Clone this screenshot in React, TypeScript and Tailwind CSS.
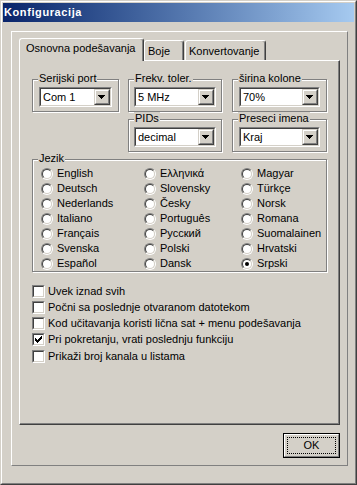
import React from "react";

function Arrow() {
  return (
    <svg width="12" height="12" viewBox="0 0 12 12" shapeRendering="crispEdges">
      <polygon
        transform="translate(2 4)"
        points="0,0 7,0 7,1 6,1 6,2 5,2 5,3 4,3 4,4 3,4 3,3 2,3 2,2 1,2 1,1 0,1"
        fill="#000"
      />
    </svg>
  );
}

function Combo({ value }: { value: string }) {
  return (
    <div className="h-[20px] w-full border border-t-[#808080] border-l-[#808080] border-r-white border-b-white">
      <div className="flex h-full border border-t-[#404040] border-l-[#404040] border-r-[#d4d0c8] border-b-[#d4d0c8] bg-white">
        <div className="flex-1 pl-[2px] leading-[16px] whitespace-nowrap overflow-hidden">{value}</div>
        <div className="h-[16px] w-[16px] border border-t-[#d4d0c8] border-l-[#d4d0c8] border-r-[#404040] border-b-[#404040]">
          <div className="h-full w-full border border-t-white border-l-white border-r-[#808080] border-b-[#808080] bg-[#d4d0c8]">
            <Arrow />
          </div>
        </div>
      </div>
    </div>
  );
}

function Group({
  label,
  className,
  children,
}: {
  label: string;
  className: string;
  children?: React.ReactNode;
}) {
  return (
    <div
      className={`relative border border-[#808080] shadow-[inset_1px_1px_0_#fff,1px_1px_0_#fff] ${className}`}
    >
      <span className="absolute -top-[8px] left-[5px] bg-[#d4d0c8] px-[1px] leading-[13px] whitespace-nowrap">
        {label}
      </span>
      {children}
    </div>
  );
}

function Radio({ label, checked }: { label: string; checked?: boolean }) {
  return (
    <div className="flex h-[15px] items-center">
      <div className="h-[12px] w-[12px] shrink-0 rounded-full border border-t-[#808080] border-l-[#808080] border-r-white border-b-white">
        <div className="flex h-full w-full items-center justify-center rounded-full border border-t-[#404040] border-l-[#404040] border-r-[#d4d0c8] border-b-[#d4d0c8] bg-white">
          {checked && <div className="h-[4px] w-[4px] rounded-full bg-black" />}
        </div>
      </div>
      <span className="ml-[4px] whitespace-nowrap">{label}</span>
    </div>
  );
}

function Check({ label, checked }: { label: string; checked?: boolean }) {
  return (
    <div className="flex h-[16.25px] items-center">
      <div className="h-[13px] w-[13px] shrink-0 border border-t-[#808080] border-l-[#808080] border-r-white border-b-white">
        <div className="h-full w-full border border-t-[#404040] border-l-[#404040] border-r-[#d4d0c8] border-b-[#d4d0c8] bg-white">
          {checked && (
            <svg width="9" height="9" viewBox="0 0 9 9" shapeRendering="crispEdges">
              <polygon
                transform="translate(1 1)"
                points="0,2 1,2 1,3 2,3 2,4 3,4 3,3 4,3 4,2 5,2 5,1 6,1 6,0 7,0 7,3 6,3 6,4 5,4 5,5 4,5 4,6 3,6 3,7 2,7 2,6 1,6 1,5 0,5"
                fill="#000"
              />
            </svg>
          )}
        </div>
      </div>
      <span className="ml-[3px] whitespace-nowrap">{label}</span>
    </div>
  );
}

const langs: [string, boolean?][] = [
  ["English"],
  ["Deutsch"],
  ["Nederlands"],
  ["Italiano"],
  ["Français"],
  ["Svenska"],
  ["Español"],
  ["Ελληνικά"],
  ["Slovensky"],
  ["Česky"],
  ["Português"],
  ["Русский"],
  ["Polski"],
  ["Dansk"],
  ["Magyar"],
  ["Türkçe"],
  ["Norsk"],
  ["Romana"],
  ["Suomalainen"],
  ["Hrvatski"],
  ["Srpski", true],
];

export default function App() {
  return (
    <div className="h-[485px] w-[357px] border border-t-[#d4d0c8] border-l-[#d4d0c8] border-r-[#404040] border-b-[#404040] font-['Liberation_Sans',Arial,sans-serif] text-[11px] leading-[13px] text-black">
      <div className="h-full w-full border border-t-white border-l-white border-r-[#808080] border-b-[#808080] bg-[#d4d0c8] p-[1px]">
        <div className="h-[19px] bg-linear-to-r from-[#0a246a] to-[#a6caf0] pl-[1px] pt-[3px] text-[11px] font-bold leading-[13px] tracking-[0.6px] text-white">
          Konfiguracija
        </div>
        <div className="ml-[8px] mt-[9px] w-[337px] border border-t-white border-l-white border-r-[#808080] border-b-[#808080] px-[7px] pt-[6px] pb-[7px]">
          {/* Tabs */}
          <div className="flex h-[22px] items-end">
            <div className="relative z-10 -mb-px h-[23px] w-[125px] rounded-t-[3px] border-l border-t border-r border-l-white border-t-white border-r-[#404040] bg-[#d4d0c8] pl-[6px] pt-[3px] shadow-[inset_-1px_0_0_#808080] whitespace-nowrap">
              Osnovna podešavanja
            </div>
            <div className="h-[20px] w-[40px] rounded-t-[3px] border-l border-t border-r border-l-white border-t-white border-r-[#404040] pl-[3px] pt-[4px] shadow-[inset_-1px_0_0_#808080]">
              Boje
            </div>
            <div className="ml-[1px] h-[20px] w-[81px] rounded-t-[3px] border-l border-t border-r border-l-white border-t-white border-r-[#404040] pl-[3px] pt-[4px] shadow-[inset_-1px_0_0_#808080]">
              Konvertovanje
            </div>
          </div>
          {/* Page */}
          <div className="h-[365px] w-[321px] border border-t-white border-l-white border-r-[#404040] border-b-[#404040] pl-[12px] pt-[18px] shadow-[inset_-1px_-1px_0_#808080]">
            <div className="flex">
              <Group label="Serijski port" className="h-[33px] w-[87px] px-[6px] pt-[7px]">
                <Combo value="Com 1" />
              </Group>
              <Group label="Frekv. toler." className="ml-[9px] h-[33px] w-[94px] px-[5px] pt-[7px]">
                <Combo value="5 MHz" />
              </Group>
              <Group label="širina kolone" className="ml-[10px] h-[33px] w-[95px] px-[6px] pt-[7px]">
                <Combo value="70%" />
              </Group>
            </div>
            <div className="mt-[7px] flex">
              <Group label="PIDs" className="ml-[96px] h-[33px] w-[94px] px-[5px] pt-[7px]">
                <Combo value="decimal" />
              </Group>
              <Group label="Preseci imena" className="ml-[10px] h-[33px] w-[95px] px-[6px] pt-[7px]">
                <Combo value="Kraj" />
              </Group>
            </div>
            <Group label="Jezik" className="mt-[7px] h-[113px] w-[295px] pl-[8px] pt-[6px]">
              <div className="grid grid-flow-col grid-cols-[103px_97px_1fr] grid-rows-[repeat(7,15px)]">
                {langs.map(([l, c]) => (
                  <Radio key={l} label={l} checked={c} />
                ))}
              </div>
            </Group>
            <div className="mt-[11px]">
              <Check label="Uvek iznad svih" />
              <Check label="Počni sa poslednje otvaranom datotekom" />
              <Check label="Kod učitavanja koristi lična sat + menu podešavanja" />
              <Check label="Pri pokretanju, vrati poslednju funkciju" checked />
              <Check label="Prikaži broj kanala u listama" />
            </div>
          </div>
          {/* OK button */}
          <div className="mt-[8px] flex justify-end">
            <div className="h-[25px] w-[57px] border border-black">
              <div className="h-full w-full border border-t-white border-l-white border-r-[#808080] border-b-[#808080] p-[2px]">
                <div className="flex h-full w-full items-center justify-center border border-dotted border-black">
                  OK
                </div>
              </div>
            </div>
          </div>
        </div>
      </div>
    </div>
  );
}
